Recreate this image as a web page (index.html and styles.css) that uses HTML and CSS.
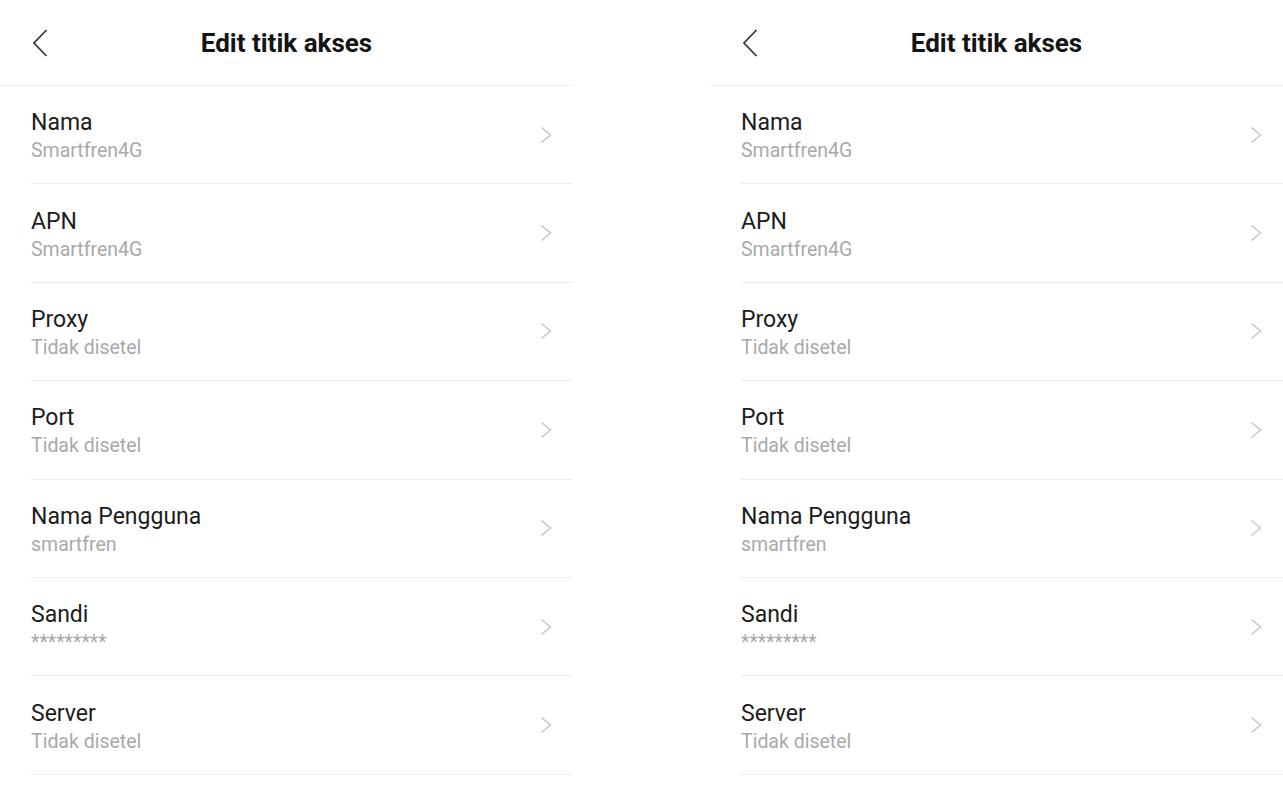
FILE: index.html
```html
<!DOCTYPE html>
<html lang="id">
<head>
    <meta charset="UTF-8">
    <meta name="viewport" content="width=device-width, initial-scale=1.0">
    <title>Edit titik akses</title>
    <link rel="stylesheet" href="styles.css">
</head>
<body>
    <section class="screen">
        <header>
            <a href="#" class="back"><svg width="16" height="28" viewBox="0 0 16 28"><path d="M14.5 1 L2 14 L14.5 27"/></svg></a>
            <h1>Edit titik akses</h1>
            <span></span>
        </header>
        <ul class="list">
            <li><div class="txt"><p class="name">Nama</p><p class="val">Smartfren4G</p></div><svg class="arrow" width="12" height="18" viewBox="0 0 12 18"><path d="M1.5 1.5 L10.5 9 L1.5 16.5"/></svg></li>
            <li><div class="txt"><p class="name">APN</p><p class="val">Smartfren4G</p></div><svg class="arrow" width="12" height="18" viewBox="0 0 12 18"><path d="M1.5 1.5 L10.5 9 L1.5 16.5"/></svg></li>
            <li><div class="txt"><p class="name">Proxy</p><p class="val">Tidak disetel</p></div><svg class="arrow" width="12" height="18" viewBox="0 0 12 18"><path d="M1.5 1.5 L10.5 9 L1.5 16.5"/></svg></li>
            <li><div class="txt"><p class="name">Port</p><p class="val">Tidak disetel</p></div><svg class="arrow" width="12" height="18" viewBox="0 0 12 18"><path d="M1.5 1.5 L10.5 9 L1.5 16.5"/></svg></li>
            <li><div class="txt"><p class="name">Nama Pengguna</p><p class="val">smartfren</p></div><svg class="arrow" width="12" height="18" viewBox="0 0 12 18"><path d="M1.5 1.5 L10.5 9 L1.5 16.5"/></svg></li>
            <li><div class="txt"><p class="name">Sandi</p><p class="val">*********</p></div><svg class="arrow" width="12" height="18" viewBox="0 0 12 18"><path d="M1.5 1.5 L10.5 9 L1.5 16.5"/></svg></li>
            <li><div class="txt"><p class="name">Server</p><p class="val">Tidak disetel</p></div><svg class="arrow" width="12" height="18" viewBox="0 0 12 18"><path d="M1.5 1.5 L10.5 9 L1.5 16.5"/></svg></li>
        </ul>
    </section>
    <section class="screen">
        <header>
            <a href="#" class="back"><svg width="16" height="28" viewBox="0 0 16 28"><path d="M14.5 1 L2 14 L14.5 27"/></svg></a>
            <h1>Edit titik akses</h1>
            <span></span>
        </header>
        <ul class="list">
            <li><div class="txt"><p class="name">Nama</p><p class="val">Smartfren4G</p></div><svg class="arrow" width="12" height="18" viewBox="0 0 12 18"><path d="M1.5 1.5 L10.5 9 L1.5 16.5"/></svg></li>
            <li><div class="txt"><p class="name">APN</p><p class="val">Smartfren4G</p></div><svg class="arrow" width="12" height="18" viewBox="0 0 12 18"><path d="M1.5 1.5 L10.5 9 L1.5 16.5"/></svg></li>
            <li><div class="txt"><p class="name">Proxy</p><p class="val">Tidak disetel</p></div><svg class="arrow" width="12" height="18" viewBox="0 0 12 18"><path d="M1.5 1.5 L10.5 9 L1.5 16.5"/></svg></li>
            <li><div class="txt"><p class="name">Port</p><p class="val">Tidak disetel</p></div><svg class="arrow" width="12" height="18" viewBox="0 0 12 18"><path d="M1.5 1.5 L10.5 9 L1.5 16.5"/></svg></li>
            <li><div class="txt"><p class="name">Nama Pengguna</p><p class="val">smartfren</p></div><svg class="arrow" width="12" height="18" viewBox="0 0 12 18"><path d="M1.5 1.5 L10.5 9 L1.5 16.5"/></svg></li>
            <li><div class="txt"><p class="name">Sandi</p><p class="val">*********</p></div><svg class="arrow" width="12" height="18" viewBox="0 0 12 18"><path d="M1.5 1.5 L10.5 9 L1.5 16.5"/></svg></li>
            <li><div class="txt"><p class="name">Server</p><p class="val">Tidak disetel</p></div><svg class="arrow" width="12" height="18" viewBox="0 0 12 18"><path d="M1.5 1.5 L10.5 9 L1.5 16.5"/></svg></li>
        </ul>
    </section>
</body>
</html>
```

FILE: styles.css
```css
* {margin:0; padding:0; box-sizing:border-box;}
body {
    display:flex; gap:137px;
    background:#fff;
    font-family:Roboto, "Noto Sans", sans-serif;
    color:#1c1c1c;
}
.screen {width:573px;}
header {
    height:86px;
    display:grid; grid-template-columns:1fr auto 1fr;
    align-items:center;
    padding:0 0 0 32px;
    border-bottom:1px solid #f0f0f0;
}
header .back {display:flex; align-items:center;}
header .back path {fill:none; stroke:#3a3a3a; stroke-width:1.8;}
header h1 {
    font-size:26px; font-weight:700;
    color:#141414;
    transform:translateX(-16px);
}
.list {list-style:none;}
.list li {
    height:98.4px;
    margin-left:31px; padding-right:21px;
    display:flex; align-items:center; justify-content:space-between;
    border-bottom:1px solid #ededed;
}
.list .txt {padding-top:2px;}
.list .name {font-size:23px; line-height:27px; color:#1c1c1c;}
.list .val {font-size:19.5px; line-height:23px; margin-top:3px; color:#a9a9a9;}
.list .arrow path {fill:none; stroke:#c6c6c6; stroke-width:1.5;}
```
